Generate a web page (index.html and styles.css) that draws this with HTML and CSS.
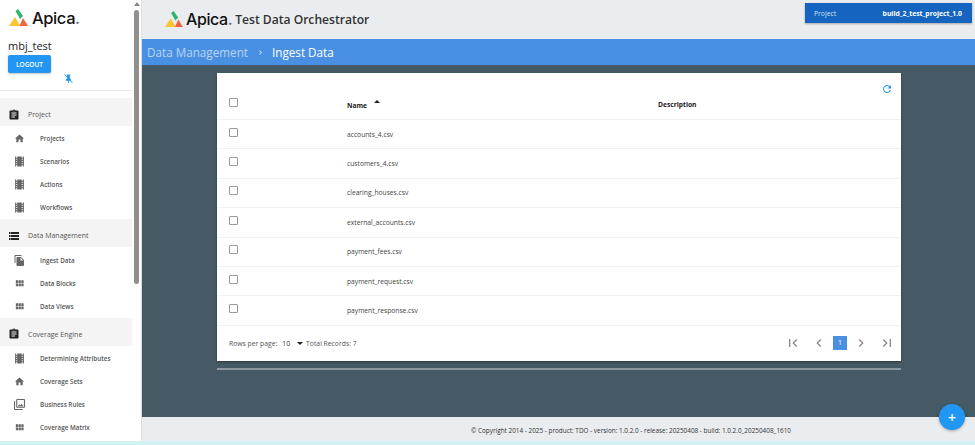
FILE: index.html
```html
<!DOCTYPE html>
<html>
<head>
    <title>Apica Test Data Orchestrator</title>
    <link rel="stylesheet" href="styles.css">
</head>
<body>
    <svg class="defs" width="0" height="0">
        <symbol id="i-assign" viewBox="0 0 24 24"><path d="M19 3h-4.18C14.4 1.84 13.3 1 12 1c-1.3 0-2.4.84-2.82 2H5c-1.1 0-2 .9-2 2v14c0 1.1.9 2 2 2h14c1.1 0 2-.9 2-2V5c0-1.1-.9-2-2-2zm-7 0c.55 0 1 .45 1 1s-.45 1-1 1-1-.45-1-1 .45-1 1-1zm2 14H7v-2h7v2zm3-4H7v-2h10v2zm0-4H7V7h10v2z"/></symbol>
        <symbol id="i-home" viewBox="0 0 24 24"><path d="M10 20v-6h4v6h5v-8h3L12 3 2 12h3v8z"/></symbol>
        <symbol id="i-movie" viewBox="2 2 20 20"><path d="M18 3v2h-2V3H8v2H6V3H4v18h2v-2h2v2h8v-2h2v2h2V3h-2zM8 17H6v-2h2v2zm0-4H6v-2h2v2zm0-4H6V7h2v2zm10 8h-2v-2h2v2zm0-4h-2v-2h2v2zm0-4h-2V7h2v2z"/></symbol>
        <symbol id="i-storage" viewBox="0 0 24 24"><path d="M2 20h20v-4H2v4zm2-3h2v2H4v-2zM2 4v4h20V4H2zm4 3H4V5h2v2zm-4 7h20v-4H2v4zm2-3h2v2H4v-2z"/></symbol>
        <symbol id="i-copy" viewBox="2 1 20 22"><path d="M16 1H4c-1.1 0-2 .9-2 2v14h2V3h12V1zm-1 4l6 6v10c0 1.1-.9 2-2 2H7.99C6.89 23 6 22.1 6 21l.01-14c0-1.1.89-2 1.99-2h7zm-1 7h5.5L14 6.5V12z"/></symbol>
        <symbol id="i-module" viewBox="0 0 24 24"><path d="M4 11h5V5H4v6zm0 7h5v-6H4v6zm6 0h5v-6h-5v6zm6 0h5v-6h-5v6zm-6-7h5V5h-5v6zm6-6v6h5V5h-5z"/></symbol>
        <symbol id="i-photo" viewBox="2 2 20 20"><path d="M20 4v12H8V4h12m0-2H8c-1.1 0-2 .9-2 2v12c0 1.1.9 2 2 2h12c1.1 0 2-.9 2-2V4c0-1.1-.9-2-2-2zm-8.5 9.67l1.69 2.26 2.48-3.1L19 15H9zM2 6v14c0 1.1.9 2 2 2h14v-2H4V6H2z"/></symbol>
        <symbol id="i-logo" viewBox="0 0 20 18"><path fill="#fbc531" d="M7 8 L12.5 17 H1 Z"/><path fill="#2fb36d" d="M7.5 2 L10 0 L15 7 L12 10 Z"/><path fill="#f0643c" d="M15 9 L20 17 H11.5 Z"/></symbol>
    </svg>

    <div class="app">
        <aside class="sidebar">
            <div class="side-scroll">
                <div class="brand">
                    <svg class="logo-mark"><use href="#i-logo"/></svg>
                    <span class="logo-text">Apica<i>.</i></span>
                </div>
                <div class="username">mbj_test</div>
                <button class="logout">LOGOUT</button>
                <svg class="pin" viewBox="0 0 24 24"><path d="M16 3v2l-1 1v5l3 4v2h-5v5h-2v-5H6v-2l3-4V6L8 5V3z"/><path class="pin-slash" d="M3 3l18 19"/></svg>
                <hr class="side-line">

                <div class="section"><svg class="ic-sec"><use href="#i-assign"/></svg>Project</div>
                <a class="item"><svg class="ic"><use href="#i-home"/></svg>Projects</a>
                <a class="item"><svg class="ic"><use href="#i-movie"/></svg>Scenarios</a>
                <a class="item"><svg class="ic"><use href="#i-movie"/></svg>Actions</a>
                <a class="item"><svg class="ic"><use href="#i-movie"/></svg>Workflows</a>

                <div class="section"><svg class="ic-sec"><use href="#i-storage"/></svg>Data Management</div>
                <a class="item"><svg class="ic"><use href="#i-copy"/></svg>Ingest Data</a>
                <a class="item"><svg class="ic"><use href="#i-module"/></svg>Data Blocks</a>
                <a class="item"><svg class="ic"><use href="#i-module"/></svg>Data Views</a>

                <div class="section"><svg class="ic-sec"><use href="#i-assign"/></svg>Coverage Engine</div>
                <a class="item"><svg class="ic"><use href="#i-movie"/></svg>Determining Attributes</a>
                <a class="item"><svg class="ic"><use href="#i-home"/></svg>Coverage Sets</a>
                <a class="item"><svg class="ic"><use href="#i-photo"/></svg>Business Rules</a>
                <a class="item"><svg class="ic"><use href="#i-module"/></svg>Coverage Matrix</a>
            </div>
            <div class="scrollbar">
                <span class="scroll-up"></span>
                <span class="scroll-thumb"></span>
            </div>
        </aside>

        <main class="main">
            <header class="topbar">
                <div class="top-brand">
                    <svg class="top-mark"><use href="#i-logo"/></svg>
                    <span class="top-apica">Apica<i>.</i></span>
                    <span class="top-title">Test Data Orchestrator</span>
                </div>
                <div class="project-box">
                    <span>Project</span>
                    <b>build_2_test_project_1.0</b>
                </div>
            </header>

            <nav class="crumbs">
                <span class="crumb-dim">Data Management</span>
                <svg class="crumb-sep" viewBox="0 0 24 24"><path d="M8.6 7.4 10 6l6 6-6 6-1.4-1.4L13.2 12z"/></svg>
                <span>Ingest Data</span>
            </nav>

            <section class="content">
                <div class="card">
                    <div class="row head">
                        <span class="check"></span>
                        <span class="col-name">Name<i class="sort"></i></span>
                        <span class="col-desc">Description</span>
                        <svg class="refresh" viewBox="0 0 24 24"><path d="M17.65 6.35C16.2 4.9 14.21 4 12 4c-4.42 0-7.99 3.58-7.99 8s3.57 8 7.99 8c3.73 0 6.84-2.55 7.73-6h-2.08c-.82 2.33-3.04 4-5.65 4-3.31 0-6-2.69-6-6s2.69-6 6-6c1.66 0 3.14.69 4.22 1.78L13 11h7V4l-2.35 2.35z"/></svg>
                    </div>
                    <div class="row"><span class="check"></span><span class="col-name">accounts_4.csv</span></div>
                    <div class="row"><span class="check"></span><span class="col-name">customers_4.csv</span></div>
                    <div class="row"><span class="check"></span><span class="col-name">clearing_houses.csv</span></div>
                    <div class="row"><span class="check"></span><span class="col-name">external_accounts.csv</span></div>
                    <div class="row"><span class="check"></span><span class="col-name">payment_fees.csv</span></div>
                    <div class="row"><span class="check"></span><span class="col-name">payment_request.csv</span></div>
                    <div class="row"><span class="check"></span><span class="col-name">payment_response.csv</span></div>
                    <div class="pager">
                        <span class="pager-info">Rows per page:</span>
                        <span class="pager-size">10</span>
                        <i class="caret"></i>
                        <span class="pager-info">Total Records: 7</span>
                        <div class="pager-nav">
                            <svg viewBox="0 0 24 24"><path d="M18.41 16.59 13.82 12l4.59-4.59L17 6l-6 6 6 6zM6 6h2v12H6z"/></svg>
                            <svg class="nav-prev" viewBox="0 0 24 24"><path d="M15.41 7.41 14 6l-6 6 6 6 1.41-1.41L10.83 12z"/></svg>
                            <span class="page-num">1</span>
                            <svg class="nav-next" viewBox="0 0 24 24"><path d="M10 6 8.59 7.41 13.17 12l-4.58 4.59L10 18l6-6z"/></svg>
                            <svg viewBox="0 0 24 24"><path d="M5.59 7.41 10.18 12l-4.59 4.59L7 18l6-6-6-6zM16 6h2v12h-2z"/></svg>
                        </div>
                    </div>
                </div>
                <div class="card-line"></div>
            </section>

            <footer class="footer">© Copyright 2014 - 2025 - product: TDO - version: 1.0.2.0 - release: 20250408 - build: 1.0.2.0_20250408_1610</footer>
            <button class="fab">+</button>
        </main>
    </div>
    <div class="strip"></div>
</body>
</html>
```

FILE: styles.css
```css
* {
    box-sizing: border-box;
}
html, body {
    margin: 0;
    height: 445px;
    overflow: hidden;
    font-family: "Open Sans", "Noto Sans", sans-serif;
    background: #fff;
}
.defs {
    position: absolute;
}
.app {
    display: flex;
    height: 441px;
}
.strip {
    height: 4px;
    background: #d3f1f0;
}

/* sidebar */
.sidebar {
    width: 142px;
    display: flex;
    flex-shrink: 0;
    background: #fff;
    overflow: hidden;
}
.side-scroll {
    width: 132px;
    flex-shrink: 0;
    overflow: hidden;
}
.brand {
    display: flex;
    align-items: center;
    gap: 4px;
    height: 18px;
    margin: 9px 0 0 8px;
}
.logo-mark {
    width: 20px;
    height: 18px;
}
.logo-text {
    font-family: "Inter", sans-serif;
    font-size: 16.5px;
    font-weight: 500;
    letter-spacing: -0.4px;
    color: #111;
}
.logo-text i, .top-apica i {
    font-style: normal;
    color: #666;
}
.username {
    margin: 9px 0 0 8px;
    height: 19px;
    line-height: 19px;
    font-size: 11px;
    color: #222;
}
.logout {
    display: block;
    width: 43px;
    height: 18px;
    margin: 0 0 0 8px;
    padding: 0;
    border: none;
    border-radius: 2px;
    background: #2196f3;
    color: #fff;
    font-family: inherit;
    font-size: 6.5px;
    font-weight: 600;
    box-shadow: 0 1px 2px rgba(0,0,0,0.25);
}
.pin {
    display: block;
    width: 11px;
    height: 11px;
    margin: 0 0 0 63px;
    fill: #2196f3;
}
.pin-slash {
    fill: none;
    stroke: #2196f3;
    stroke-width: 2;
}
.side-line {
    margin: 6px 0 7px;
    border: none;
    border-top: 1px solid #e6e6e6;
}
.section {
    display: flex;
    align-items: center;
    height: 28px;
    margin-bottom: 1.3px;
    padding: 5px 0 0 8px;
    background: #f4f4f4;
    color: #555;
    font-size: 7px;
}
.ic-sec {
    width: 12px;
    height: 12px;
    margin-right: 8px;
    fill: #222;
}
.item {
    display: flex;
    align-items: center;
    height: 23px;
    padding-left: 14px;
    color: #555;
    font-size: 6.3px;
    font-weight: 600;
}
.ic {
    width: 11px;
    height: 11px;
    margin-right: 15px;
    fill: #666;
}
.scrollbar {
    width: 10px;
    padding-left: 1px;
    background: #fff;
    border-right: 1px solid #ddd;
}
.scroll-up {
    display: block;
    width: 0;
    margin: 2px 0 0 1px;
    border-left: 3px solid transparent;
    border-right: 3px solid transparent;
    border-bottom: 4px solid #888;
}
.scroll-thumb {
    display: block;
    width: 5px;
    height: 274px;
    margin: 4px 0 0 1px;
    border-radius: 3px;
    background: #8f8f8f;
}

/* main */
.main {
    position: relative;
    flex: 1;
    min-width: 0;
    display: flex;
    flex-direction: column;
}
.topbar {
    height: 39px;
    flex-shrink: 0;
    display: flex;
    justify-content: space-between;
    align-items: flex-start;
    background: #eaedf0;
}
.top-brand {
    display: flex;
    align-items: center;
    height: 18px;
    margin: 10px 0 0 22px;
}
.top-mark {
    width: 19px;
    height: 17px;
    margin-right: 3px;
}
.top-apica {
    font-family: "Inter", sans-serif;
    font-size: 16px;
    font-weight: 500;
    letter-spacing: -0.4px;
    color: #111;
    margin-right: 3px;
}
.top-title {
    font-size: 12.1px;
    font-weight: 600;
    color: #333;
}
.project-box {
    width: 167px;
    height: 20px;
    margin: 3px 3px 0 0;
    padding: 0 10px 0 9px;
    display: flex;
    justify-content: space-between;
    align-items: center;
    background: #1565c0;
    color: #cfe0f5;
    font-size: 6.8px;
    box-shadow: 0 1px 2px rgba(0,0,0,0.3);
}
.project-box b {
    color: #fff;
    font-weight: 700;
}
.crumbs {
    height: 26px;
    flex-shrink: 0;
    display: flex;
    align-items: center;
    padding-left: 5px;
    background: #4a90e2;
    color: #fff;
    font-size: 11.7px;
}
.crumb-dim {
    color: #b7d4f5;
}
.crumb-sep {
    width: 9px;
    height: 9px;
    margin: 0 7px 0 8px;
    fill: #dbe9fa;
}
.content {
    flex: 1;
    padding: 8px 74px 0 75px;
    background: #455a64;
}
.card {
    height: 288px;
    background: #fff;
    box-shadow: 0 1px 2px rgba(0,0,0,0.4);
}
.card-line {
    height: 2px;
    margin-top: 7px;
    background: #8b979d;
}
.row {
    display: flex;
    align-items: center;
    height: 29.4px;
    border-bottom: 1px solid #f1f1f1;
    padding-left: 12px;
    font-size: 6.7px;
    color: #444;
}
.row.head {
    position: relative;
    height: 47px;
    padding-top: 20px;
    font-weight: 700;
    color: #222;
}
.head .check {
    margin-top: -8px;
}
.col-desc {
    margin-top: -4px;
}
.check {
    width: 9px;
    height: 9px;
    flex-shrink: 0;
    border: 1px solid #9a9a9a;
    border-radius: 1px;
    margin-top: -4px;
}
.col-name {
    margin-left: 109px;
    width: 311px;
}
.sort {
    display: inline-block;
    margin: 0 0 9px 7px;
    vertical-align: middle;
    border-left: 3px solid transparent;
    border-right: 3px solid transparent;
    border-bottom: 3px solid #222;
}
.refresh {
    position: absolute;
    right: 8px;
    top: 10px;
    width: 12px;
    height: 12px;
    fill: #2196f3;
}
.pager {
    display: flex;
    align-items: center;
    height: 35px;
    padding: 0 6px 0 12px;
    font-size: 6.8px;
    color: #555;
}
.pager-size {
    margin-left: 5px;
    color: #333;
}
.caret {
    margin: 0 3px 0 7px;
    border-left: 3px solid transparent;
    border-right: 3px solid transparent;
    border-top: 3px solid #222;
}
.pager-nav {
    margin-left: auto;
    display: flex;
    align-items: center;
    gap: 6px;
}
.pager-nav svg {
    width: 16px;
    height: 16px;
    fill: #8a8a8a;
}
.nav-prev {
    margin-left: 4px;
}
.nav-next {
    margin-right: 4px;
}
.page-num {
    width: 14px;
    height: 14px;
    line-height: 14px;
    text-align: center;
    background: #4a90e2;
    color: #fff;
    font-size: 7px;
}
.footer {
    height: 24px;
    flex-shrink: 0;
    display: flex;
    align-items: center;
    padding: 2px 0 0 329px;
    background: #eaedf0;
    color: #333;
    font-size: 6.4px;
}
.fab {
    position: absolute;
    right: 10px;
    bottom: 11px;
    width: 26px;
    height: 26px;
    padding: 0;
    border: none;
    border-radius: 50%;
    background: #2196f3;
    color: #fff;
    font-size: 14px;
    font-weight: 600;
    font-family: inherit;
    box-shadow: 0 1px 3px rgba(0,0,0,0.3);
}
```
